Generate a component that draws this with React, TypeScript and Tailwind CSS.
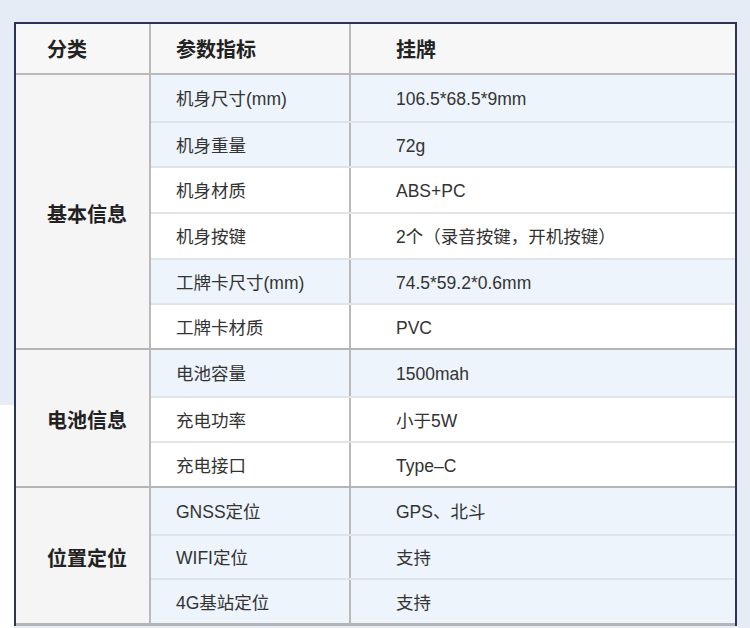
const groups = [
  {
    name: "基本信息",
    rows: [
      { k: "机身尺寸(mm)", v: "106.5*68.5*9mm", blue: true, h: "h-[46px]" },
      { k: "机身重量", v: "72g", blue: true, h: "h-[45px]" },
      { k: "机身材质", v: "ABS+PC", blue: false, h: "h-[46px]" },
      { k: "机身按键", v: "2个（录音按键，开机按键）", blue: false, h: "h-[46px]" },
      { k: "工牌卡尺寸(mm)", v: "74.5*59.2*0.6mm", blue: true, h: "h-[45px]" },
      { k: "工牌卡材质", v: "PVC", blue: false, h: "h-[45px]" },
    ],
  },
  {
    name: "电池信息",
    rows: [
      { k: "电池容量", v: "1500mah", blue: true, h: "h-[46px]" },
      { k: "充电功率", v: "小于5W", blue: false, h: "h-[45px]" },
      { k: "充电接口", v: "Type–C", blue: false, h: "h-[45px]" },
    ],
  },
  {
    name: "位置定位",
    rows: [
      { k: "GNSS定位", v: "GPS、北斗", blue: true, h: "h-[46px]" },
      { k: "WIFI定位", v: "支持", blue: true, h: "h-[44px]" },
      { k: "4G基站定位", v: "支持", blue: true, h: "h-[45px]" },
    ],
  },
];

const App = () => {
  return (
    <div
      className="flex w-[750px] h-[628px] bg-[#e5ecf5] overflow-hidden text-[#333]"
      style={{ fontFamily: '"Liberation Sans", "Noto Sans CJK SC", sans-serif' }}
    >
      {/* left gutter: blue top, white bottom */}
      <div className="flex flex-col w-[14px] shrink-0">
        <div className="h-[405px] bg-[#e5ecf5]" />
        <div className="flex-1 bg-white" />
      </div>

      <div className="flex flex-col pt-[22px] w-[723px] shrink-0">
        <div className="flex flex-col border-t-2 border-l-2 border-r-2 border-[#2b3452] bg-white">
          {/* header */}
          <div className="flex h-[51px] bg-[#f7f7f7] border-b-2 border-[#b9b9b9] text-[20px] font-semibold text-[#222]">
            <div className="w-[135px] flex items-center pl-[31px] pt-[3px] border-r-2 border-[#b9b9b9]">分类</div>
            <div className="w-[200px] flex items-center pl-[25px] pt-[3px] border-r-2 border-[#b9b9b9]">参数指标</div>
            <div className="flex-1 flex items-center pl-[45px] pt-[3px]">挂牌</div>
          </div>

          {groups.map((g, gi) => (
            <div
              key={g.name}
              className={`flex ${gi < groups.length - 1 ? "border-b-2" : "border-b-[3px]"} border-[#b5b5b5]`}
            >
              <div className="w-[135px] bg-[#f5f5f5] flex items-center pl-[31px] pt-[6px] border-r-2 border-[#b9b9b9] text-[20px] font-semibold text-[#222]">
                {g.name}
              </div>
              <div className="flex-1 flex flex-col">
                {g.rows.map((r, ri) => (
                  <div
                    key={r.k}
                    className={`flex ${r.h} text-[17.5px] ${r.blue ? "bg-[#edf4fc]" : "bg-white"} ${
                      ri > 0 ? "border-t-2 border-[#e0e4ea]" : ""
                    }`}
                  >
                    <div className="w-[200px] flex items-center pl-[25px] pt-[3px] border-r-2 border-[#b9b9b9]">{r.k}</div>
                    <div className="flex-1 flex items-center pl-[45px] pt-[3px]">{r.v}</div>
                  </div>
                ))}
              </div>
            </div>
          ))}
        </div>
      </div>
      <div className="flex-1 bg-[#e5ecf5]" />
    </div>
  );
};

export default App;
